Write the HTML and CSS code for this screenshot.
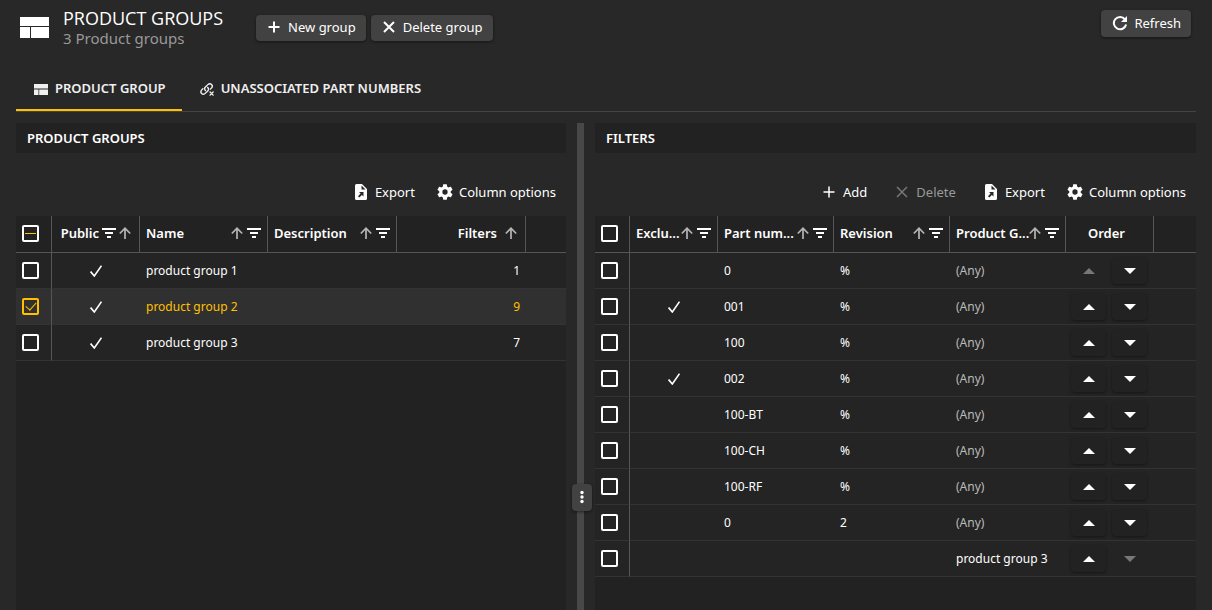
FILE: index.html
```html
<!DOCTYPE html>
<html lang="en">
<head>
<meta charset="utf-8">
<meta name="viewport" content="width=device-width, initial-scale=1">
<title>Product groups</title>
<link rel="stylesheet" href="styles.css">
</head>
<body>
<svg class="sprite" aria-hidden="true">
  <symbol id="i-layout" viewBox="0 0 29 21"><path d="M0 0h29v9H0zM0 10h10v11H0zM11 10h18v11H11z"/></symbol>
  <symbol id="i-layout-sm" viewBox="0 0 14 11"><path d="M0 0h14v4.500H0zM0 5.500h4.500V11H0zM5.200 5.500H14V11H5.200z"/></symbol>
  <symbol id="i-plus" viewBox="0 0 12 12"><path d="M6 .5v11M.5 6h11" class="line"/></symbol>
  <symbol id="i-cross" viewBox="0 0 12 12"><path d="M1 1l10 10M11 1L1 11" class="line"/></symbol>
  <symbol id="i-refresh" viewBox="0 0 16 16"><path d="M13 4.300A6.200 6.200 0 1 0 14.100 9.600" fill="none" stroke="currentColor" stroke-width="2"/><path d="M15 1v6H9z"/></symbol>
  <symbol id="i-unlink" viewBox="0 0 16 16"><g fill="none" stroke="currentColor" stroke-width="1.600" stroke-linecap="round"><path d="M6.200 9.800C5 8.600 5 7 6.200 5.800L9 3C10.300 1.700 12 1.700 13.200 2.800 14.300 4 14.300 5.700 13 7L12 8"/><path d="M8.800 6.200C10 7.400 10 9 8.800 10.200L6 13C4.700 14.300 3 14.300 1.900 13.200 .8 12 .8 10.300 2 9L3.200 7.800"/><path d="M11.500 11.500l3.500 3.500M15 11.500L11.500 15"/></g></symbol>
  <symbol id="i-export" viewBox="0 0 12 16"><path fill-rule="evenodd" d="M1.500 0H7l5 5v9.500a1.500 1.500 0 0 1-1.500 1.500h-9A1.500 1.500 0 0 1 0 14.500v-13A1.500 1.500 0 0 1 1.500 0zM6.500 1.500V5.500h4zM4 8l1.600 1.600L3 12.200 4.300 13.500 6.900 10.900 8.500 12.500V8z"/></symbol>
  <symbol id="i-gear" viewBox="2 2 20 20"><path d="M19.140 12.940c.04-.3.060-.61.060-.94 0-.32-.02-.64-.07-.94l2.030-1.580a.49.49 0 0 0 .12-.61l-1.920-3.320a.488.488 0 0 0-.59-.22l-2.390.96c-.5-.38-1.030-.7-1.620-.94l-.36-2.540a.484.484 0 0 0-.48-.41h-3.840c-.24 0-.43.17-.47.41l-.36 2.540c-.59.24-1.130.57-1.620.94l-2.390-.96c-.22-.08-.47 0-.59.22L2.740 8.870c-.12.21-.08.47.12.61l2.030 1.580c-.05.3-.09.63-.09.940s.02.64.07.940l-2.030 1.580a.49.49 0 0 0-.12.61l1.920 3.320c.12.22.37.29.59.22l2.390-.96c.5.38 1.030.7 1.620.94l.36 2.540c.05.24.24.41.48.41h3.840c.24 0 .44-.17.470-.41l.36-2.540c.59-.24 1.130-.56 1.620-.94l2.390.96c.22.08.47 0 .59-.22l1.920-3.320c.12-.22.07-.47-.12-.61l-2.010-1.580zM12 15.300a3.300 3.300 0 1 1 0-6.600 3.300 3.300 0 0 1 0 6.600z"/></symbol>
  <symbol id="i-sort" viewBox="0 0 12 12"><path d="M6 12V1.500M.8 6.500L6 1.200l5.200 5.300" fill="none" stroke="currentColor" stroke-width="1.700"/></symbol>
  <symbol id="i-filter" viewBox="0 0 14 10"><path d="M0 0h14v2H0zM3 4h8v2H3zM5 8h4v2H5z"/></symbol>
  <symbol id="i-check" viewBox="0 0 12 12"><path d="M.6 6.600L4.300 11 11.500.6" fill="none" stroke="currentColor" stroke-width="1.600"/></symbol>
  <symbol id="i-up" viewBox="0 0 12 6"><path d="M0 6L6 0l6 6z"/></symbol>
  <symbol id="i-down" viewBox="0 0 12 6"><path d="M0 0h12L6 6z"/></symbol>
  <symbol id="i-dots" viewBox="0 0 4 14"><circle cx="2" cy="2.500" r="1.700"/><circle cx="2" cy="7" r="1.700"/><circle cx="2" cy="11.500" r="1.700"/></symbol>
</svg>

<header class="page-header">
  <svg class="logo"><use href="#i-layout"/></svg>
  <div class="titles">
    <h1>PRODUCT GROUPS</h1>
    <p>3 Product groups</p>
  </div>
  <div class="group-actions">
    <button class="btn raised"><svg class="i12 bold"><use href="#i-plus"/></svg>New group</button>
    <button class="btn raised"><svg class="i12 bold"><use href="#i-cross"/></svg>Delete group</button>
  </div>
  <button class="btn raised refresh"><svg class="i16"><use href="#i-refresh"/></svg>Refresh</button>
</header>

<nav class="tabs" role="tablist">
  <button class="tab active" role="tab" aria-selected="true"><svg class="tab-layout"><use href="#i-layout-sm"/></svg>PRODUCT GROUP</button>
  <button class="tab" role="tab" aria-selected="false"><svg class="tab-unlink"><use href="#i-unlink"/></svg>UNASSOCIATED PART NUMBERS</button>
</nav>

<main class="split">
  <section class="panel">
    <h2>PRODUCT GROUPS</h2>
    <div class="toolbar">
      <button class="btn"><svg class="i-doc"><use href="#i-export"/></svg>Export</button>
      <button class="btn"><svg class="i16"><use href="#i-gear"/></svg>Column options</button>
    </div>
    <div class="grid">
      <table>
        <colgroup><col class="w-check-l"><col class="w-88"><col class="w-128"><col class="w-129"><col class="w-129"><col></colgroup>
        <thead><tr>
          <th><input type="checkbox" class="mixed" aria-label="Select all groups"></th>
          <th class="inset"><div class="head tight"><span>Public</span><svg class="filter"><use href="#i-filter"/></svg><svg class="sort"><use href="#i-sort"/></svg></div></th>
          <th><div class="head"><span class="label">Name</span><svg class="sort"><use href="#i-sort"/></svg><svg class="filter"><use href="#i-filter"/></svg></div></th>
          <th><div class="head"><span class="label">Description</span><svg class="sort"><use href="#i-sort"/></svg><svg class="filter"><use href="#i-filter"/></svg></div></th>
          <th class="inset"><div class="head end"><span>Filters</span><svg class="sort"><use href="#i-sort"/></svg></div></th>
          <th></th>
        </tr></thead>
        <tbody>
          <tr><td><input type="checkbox" aria-label="Select product group 1"></td><td class="mid"><svg class="i12"><use href="#i-check"/></svg></td><td>product group 1</td><td></td><td class="num">1</td><td></td></tr>
          <tr class="selected"><td><input type="checkbox" checked aria-label="Select product group 2"></td><td class="mid"><svg class="i12"><use href="#i-check"/></svg></td><td>product group 2</td><td></td><td class="num">9</td><td></td></tr>
          <tr><td><input type="checkbox" aria-label="Select product group 3"></td><td class="mid"><svg class="i12"><use href="#i-check"/></svg></td><td>product group 3</td><td></td><td class="num">7</td><td></td></tr>
        </tbody>
      </table>
    </div>
  </section>

  <div class="splitter"><button class="handle" aria-label="Resize panels"><svg class="dots"><use href="#i-dots"/></svg></button></div>

  <section class="panel">
    <h2>FILTERS</h2>
    <div class="toolbar">
      <button class="btn"><svg class="i12"><use href="#i-plus"/></svg>Add</button>
      <button class="btn" disabled><svg class="i12"><use href="#i-cross"/></svg>Delete</button>
      <button class="btn"><svg class="i-doc"><use href="#i-export"/></svg>Export</button>
      <button class="btn"><svg class="i16"><use href="#i-gear"/></svg>Column options</button>
    </div>
    <div class="grid">
      <table>
        <colgroup><col class="w-check-r"><col class="w-88"><col class="w-116"><col class="w-116"><col class="w-116"><col class="w-88"><col></colgroup>
        <thead><tr>
          <th><input type="checkbox" aria-label="Select all filters"></th>
          <th><div class="head"><span class="label">Exclu...</span><svg class="sort"><use href="#i-sort"/></svg><svg class="filter"><use href="#i-filter"/></svg></div></th>
          <th><div class="head"><span class="label">Part num...</span><svg class="sort"><use href="#i-sort"/></svg><svg class="filter"><use href="#i-filter"/></svg></div></th>
          <th><div class="head"><span class="label">Revision</span><svg class="sort"><use href="#i-sort"/></svg><svg class="filter"><use href="#i-filter"/></svg></div></th>
          <th><div class="head"><span class="label">Product G...</span><svg class="sort"><use href="#i-sort"/></svg><svg class="filter"><use href="#i-filter"/></svg></div></th>
          <th class="order-head">Order</th>
          <th></th>
        </tr></thead>
        <tbody>
          <tr><td><input type="checkbox" aria-label="Select filter 1"></td><td></td><td>0</td><td>%</td><td class="any">(Any)</td><td><div class="order"><button disabled aria-label="Move up"><svg><use href="#i-up"/></svg></button><button aria-label="Move down"><svg><use href="#i-down"/></svg></button></div></td><td></td></tr>
          <tr><td><input type="checkbox" aria-label="Select filter 2"></td><td class="mid"><svg class="i12"><use href="#i-check"/></svg></td><td>001</td><td>%</td><td class="any">(Any)</td><td><div class="order"><button aria-label="Move up"><svg><use href="#i-up"/></svg></button><button aria-label="Move down"><svg><use href="#i-down"/></svg></button></div></td><td></td></tr>
          <tr><td><input type="checkbox" aria-label="Select filter 3"></td><td></td><td>100</td><td>%</td><td class="any">(Any)</td><td><div class="order"><button aria-label="Move up"><svg><use href="#i-up"/></svg></button><button aria-label="Move down"><svg><use href="#i-down"/></svg></button></div></td><td></td></tr>
          <tr><td><input type="checkbox" aria-label="Select filter 4"></td><td class="mid"><svg class="i12"><use href="#i-check"/></svg></td><td>002</td><td>%</td><td class="any">(Any)</td><td><div class="order"><button aria-label="Move up"><svg><use href="#i-up"/></svg></button><button aria-label="Move down"><svg><use href="#i-down"/></svg></button></div></td><td></td></tr>
          <tr><td><input type="checkbox" aria-label="Select filter 5"></td><td></td><td>100-BT</td><td>%</td><td class="any">(Any)</td><td><div class="order"><button aria-label="Move up"><svg><use href="#i-up"/></svg></button><button aria-label="Move down"><svg><use href="#i-down"/></svg></button></div></td><td></td></tr>
          <tr><td><input type="checkbox" aria-label="Select filter 6"></td><td></td><td>100-CH</td><td>%</td><td class="any">(Any)</td><td><div class="order"><button aria-label="Move up"><svg><use href="#i-up"/></svg></button><button aria-label="Move down"><svg><use href="#i-down"/></svg></button></div></td><td></td></tr>
          <tr><td><input type="checkbox" aria-label="Select filter 7"></td><td></td><td>100-RF</td><td>%</td><td class="any">(Any)</td><td><div class="order"><button aria-label="Move up"><svg><use href="#i-up"/></svg></button><button aria-label="Move down"><svg><use href="#i-down"/></svg></button></div></td><td></td></tr>
          <tr><td><input type="checkbox" aria-label="Select filter 8"></td><td></td><td>0</td><td>2</td><td class="any">(Any)</td><td><div class="order"><button aria-label="Move up"><svg><use href="#i-up"/></svg></button><button aria-label="Move down"><svg><use href="#i-down"/></svg></button></div></td><td></td></tr>
          <tr><td><input type="checkbox" aria-label="Select filter 9"></td><td></td><td></td><td></td><td>product group 3</td><td><div class="order"><button aria-label="Move up"><svg><use href="#i-up"/></svg></button><button disabled aria-label="Move down"><svg><use href="#i-down"/></svg></button></div></td><td></td></tr>
        </tbody>
      </table>
    </div>
  </section>
</main>
</body>
</html>
```
FILE: styles.css
```css
* { box-sizing: border-box; }

body {
  margin: 0;
  min-height: 100vh;
  padding: 0 16px;
  display: flex;
  flex-direction: column;
  background: #282828;
  color: #fff;
  font: 13px/18px "Noto Sans", "Open Sans", sans-serif;
}

svg { fill: currentColor; flex: none; display: block; }
.sprite { position: absolute; width: 0; height: 0; }
.line { fill: none; stroke: currentColor; stroke-width: inherit; }
.i12 { width: 12px; height: 12px; stroke-width: 1.5; }
.i16 { width: 16px; height: 16px; }
.i-doc { width: 12px; height: 16px; }

button {
  font: inherit;
  color: inherit;
  background: none;
  border: 0;
  padding: 0;
  cursor: pointer;
}

/* Page header */
.page-header {
  display: flex;
  align-items: flex-start;
  padding: 8px 5px 0 4px;
  height: 68px;
}
.logo { width: 29px; height: 21px; margin-top: 9px; }
.titles { margin-left: 14px; }
h1 { margin: 0; font: 400 18px/20px "Open Sans", "Noto Sans", sans-serif; }
.titles p { margin: 0; font-size: 15px; line-height: 20px; color: #999; }
.group-actions { display: flex; gap: 5px; margin: 7px 0 0 33px; }

.btn {
  display: flex;
  align-items: center;
  gap: 8px;
  white-space: nowrap;
}
.btn:disabled { color: #999; }
.raised {
  height: 26px;
  padding: 0 10px 2px 12px;
  border-radius: 4px;
  background: #424242;
  box-shadow: 0 1px 3px rgba(0, 0, 0, .5);
}
.raised .bold { stroke-width: 2; }
.refresh { margin: 2px 0 0 auto; height: 27px; gap: 6px; padding-left: 11px; }

/* Tabs */
.tabs { display: flex; border-bottom: 1px solid #444; }
.tab {
  display: flex;
  align-items: center;
  gap: 7px;
  height: 43px;
  padding: 0 16px 2px 18px;
  border-bottom: 2px solid transparent;
  font-weight: 600;
  color: #f0f0f0;
}
.tab.active { border-color: #ffc000; }
.tab svg { margin-top: 3px; }
.tab-layout { width: 14px; height: 11px; }
.tab-unlink { width: 14px; height: 14px; }

/* Panels */
.split {
  flex: 1;
  margin-top: 11px;
  display: grid;
  grid-template-columns: minmax(0, 550fr) 7px minmax(0, 601fr);
  column-gap: 11px;
}
.panel { display: flex; flex-direction: column; }
h2 {
  margin: 0;
  padding: 0 11px;
  font-size: 13px;
  line-height: 30px;
  font-weight: 600;
  background: #222;
}
.toolbar {
  display: flex;
  justify-content: flex-end;
  gap: 22px;
  padding: 30px 10px 15px;
}
.toolbar .btn { height: 18px; }
.toolbar .btn:has(.i16) { gap: 6px; }
.toolbar .btn:disabled { margin: 0 7px; }
.toolbar .btn:disabled svg { color: #777; }

.splitter {
  position: relative;
  background: #484848;
}
.handle {
  position: absolute;
  top: 361px;
  left: -5px;
  width: 20px;
  height: 27px;
  padding-bottom: 1px;
  display: grid;
  place-items: center;
  border-radius: 4px;
  background: #424242;
  box-shadow: 0 1px 3px rgba(0, 0, 0, .5);
}
.dots { width: 4px; height: 14px; }

/* Data grid */
.grid { flex: 1; background: #222; }
table { width: 100%; table-layout: fixed; border-collapse: separate; border-spacing: 0; }
.w-check-l { width: 36px; }
.w-check-r { width: 35px; }
.w-88 { width: 88px; }
.w-116 { width: 116px; }
.w-128 { width: 128px; }
.w-129 { width: 129px; }

th, td { padding: 0 6px; text-align: left; white-space: nowrap; }
th {
  height: 37px;
  padding-bottom: 2px;
  font-weight: 600;
  border-right: 1px solid #565656;
  border-bottom: 1px solid #565656;
}
th:last-child { border-right: 0; }
th.inset { padding-right: 8px; }
th.order-head { padding-right: 12px; text-align: center; }
td { height: 36px; border-bottom: 1px solid #333; font-size: 12px; background: #242424; }
td:first-child { border-right: 1px solid #565656; }
.mid { text-align: center; }
.mid svg { margin: 0 auto; }
.num { text-align: right; }
.any { color: #bbb; }
.selected td { background: #303030; color: #fff; }
.selected td:nth-child(3), .selected .num { color: #ffc000; }

.head { display: flex; align-items: center; gap: 4px; }
.label { flex: 1; min-width: 0; margin-right: -4px; }
.head.tight { justify-content: flex-end; gap: 3px; }
.head.end { justify-content: flex-end; gap: 8px; }
.sort { width: 12px; height: 12px; color: #b5b5b5; }
.filter { width: 14px; height: 10px; }

input[type="checkbox"] {
  appearance: none;
  display: grid;
  place-items: center;
  width: 17px;
  height: 17px;
  margin: 0;
  border: 2px solid #fff;
  border-radius: 2px;
}
input.mixed::before { content: ""; width: 11px; height: 1px; background: #ffc000; }
input[type="checkbox"]:checked { border-color: #ffc000; }
input:checked::before {
  content: "";
  width: 9px;
  height: 5px;
  margin-bottom: 3px;
  border: solid #ffc000;
  border-width: 0 0 1px 1px;
  transform: rotate(-48deg);
}

.order { display: flex; gap: 6px; margin: 0 -1px; }
.order button {
  display: grid;
  place-items: center;
  width: 35px;
  height: 26px;
  border-radius: 4px;
  background: #222;
  box-shadow: 0 1px 3px rgba(0, 0, 0, .4);
}
.order button:disabled { background: none; box-shadow: none; color: #777; }
.order svg { width: 12px; height: 6px; }
```
